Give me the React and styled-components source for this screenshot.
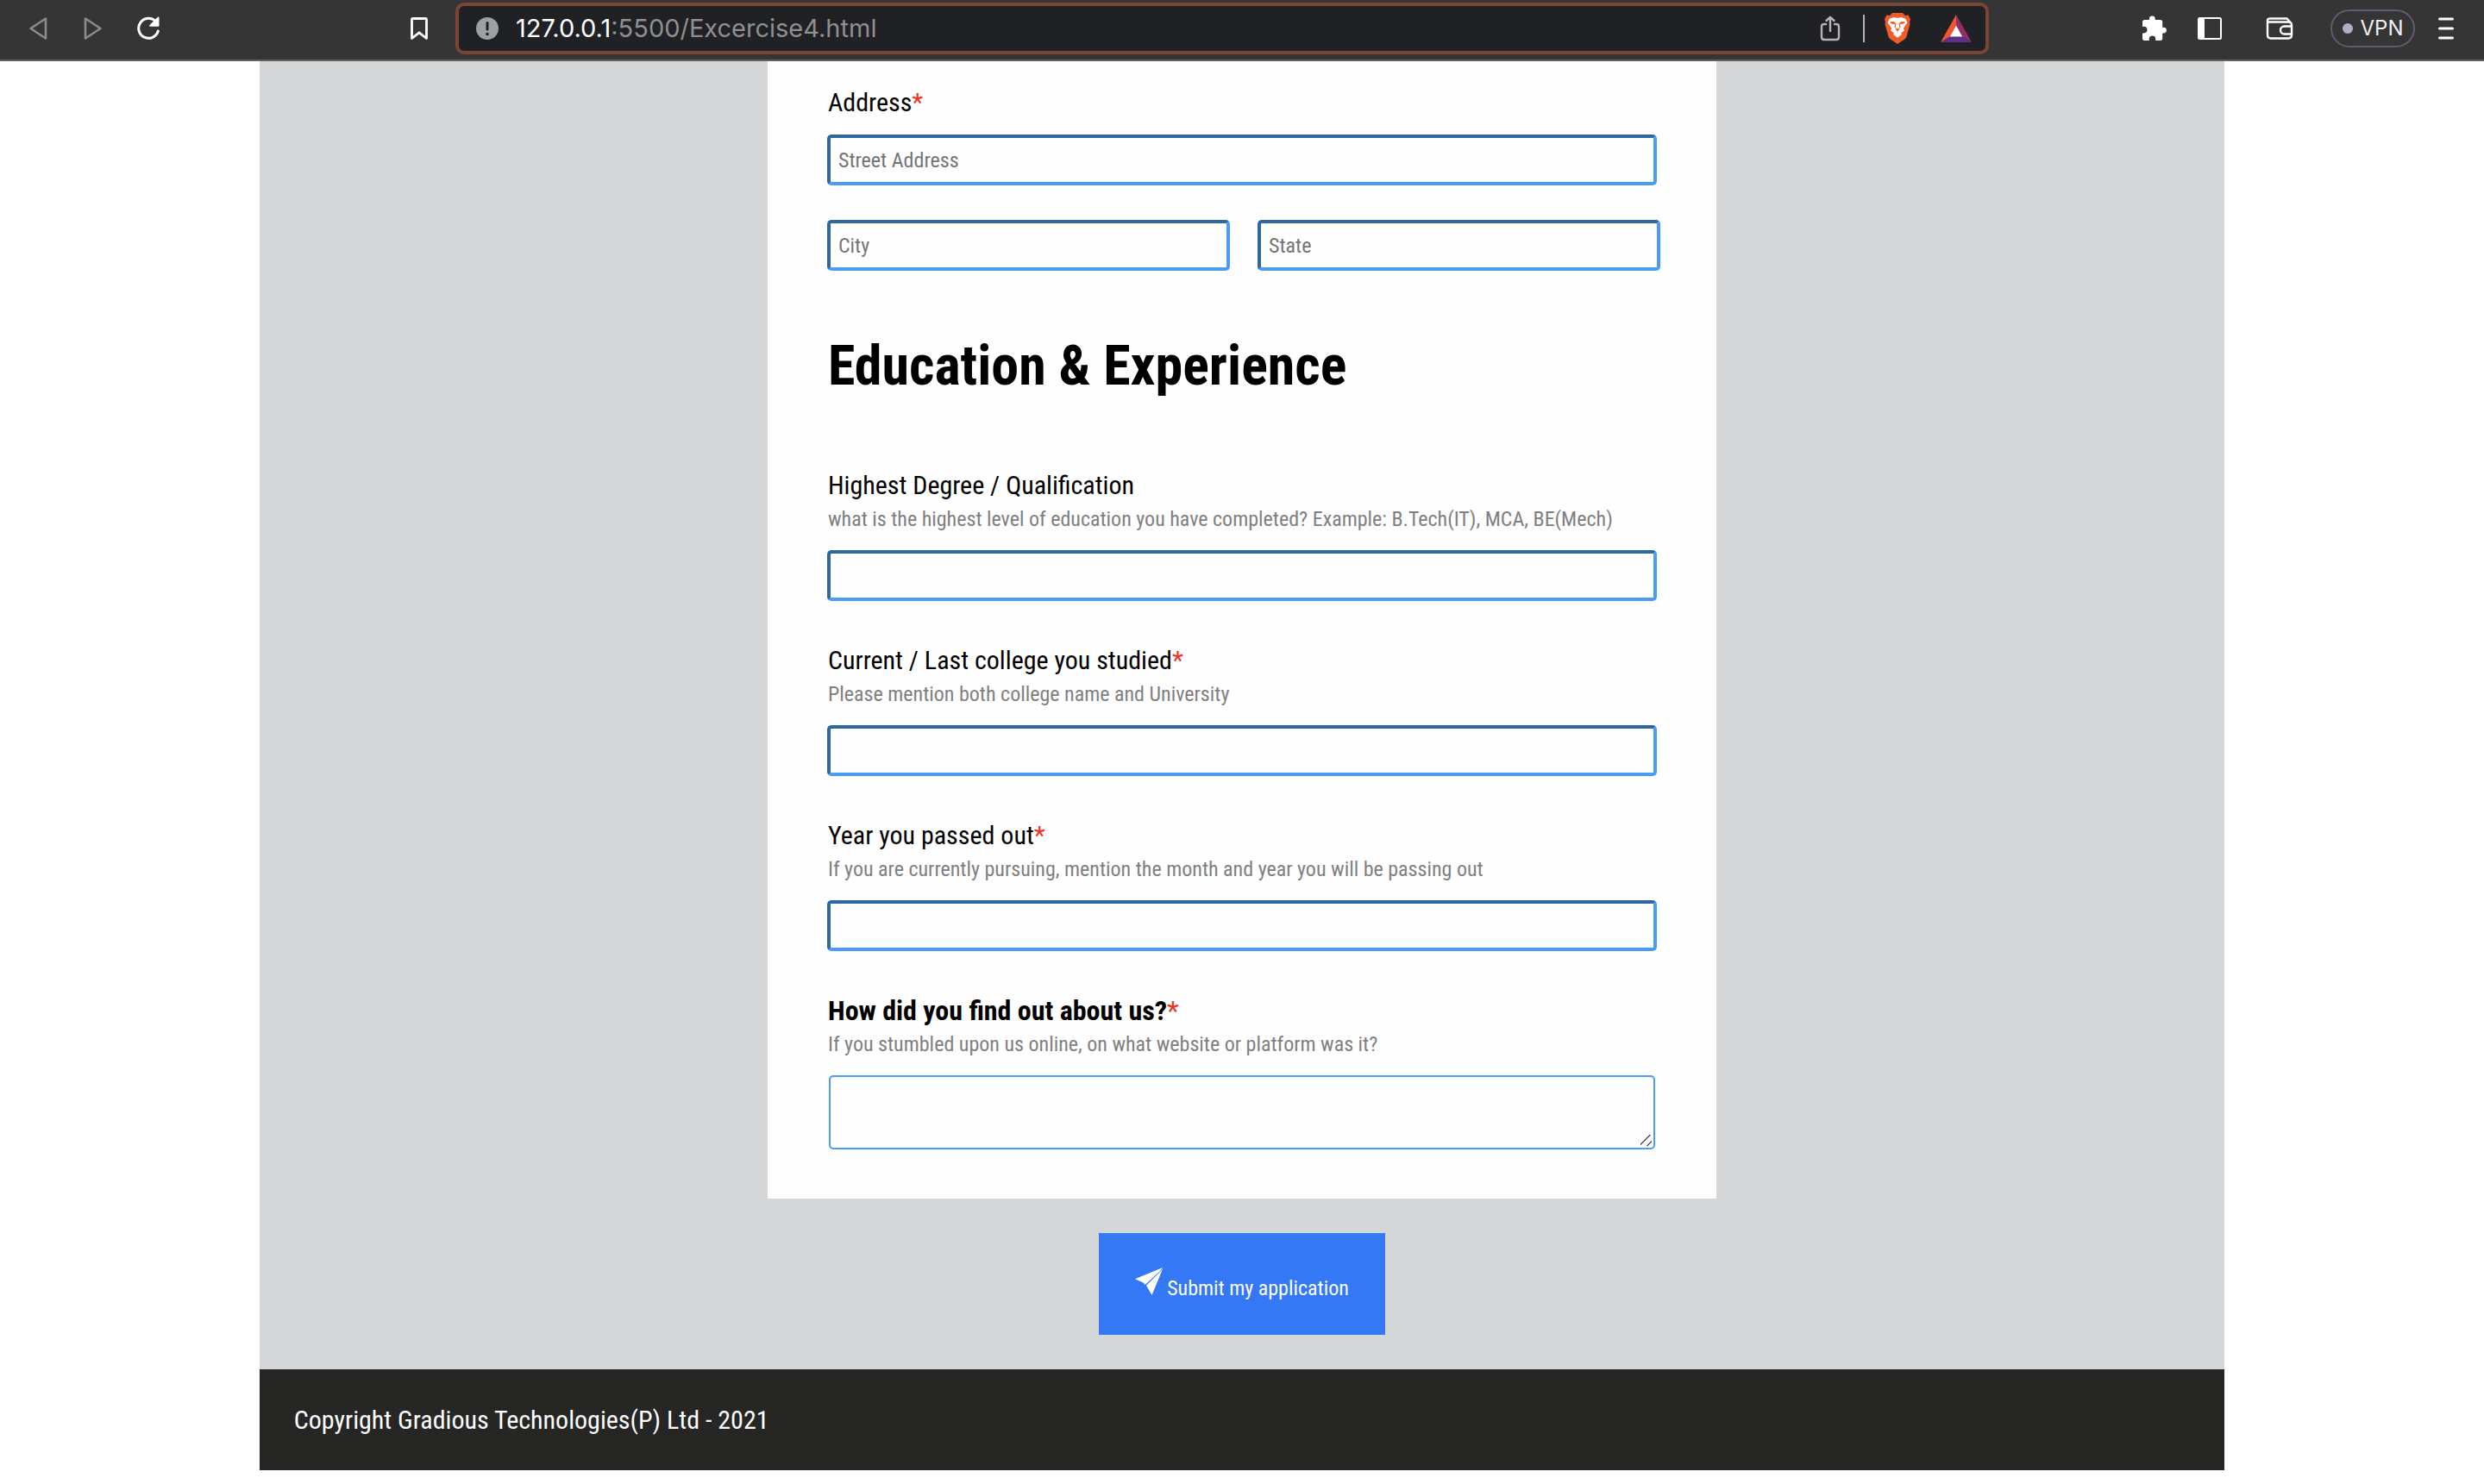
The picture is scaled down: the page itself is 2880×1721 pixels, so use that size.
import React from "react";
import styled, { createGlobalStyle, css } from "styled-components";

const narrow = `"Liberation Sans Narrow", "Arial Narrow", "Roboto Condensed", "Liberation Sans", Arial, sans-serif`;
const ui = `Inter, Roboto, "Liberation Sans", sans-serif`;

const GlobalStyle = createGlobalStyle`
  *, *::before, *::after { box-sizing: border-box; }
  body { margin: 0; background: #fff; font-family: ${narrow}; }
`;

/* ---------- browser toolbar ---------- */

const Toolbar = styled.header`
  display: flex;
  align-items: center;
  height: 71px;
  padding: 0 22px 3px;
  background: #353535;
  border-bottom: 2px solid #626263;
  font-family: ${ui};
`;

const ToolGroup = styled.div`
  display: flex;
  align-items: center;
  gap: ${(p) => p.$gap || 0}px;
`;

const NavTools = styled(ToolGroup)`
  width: 506px;
  padding-right: 20px;

  > :last-child { margin-left: auto; }
`;

const RightTools = styled(ToolGroup)`
  width: 552px;
  justify-content: flex-end;
`;

const IconButton = styled.button`
  display: grid;
  place-items: center;
  width: ${(p) => (p.$small ? 36 : 44)}px;
  height: 44px;
  padding: 0;
  border: 0;
  background: none;
  color: ${(p) => p.$color || "#fff"};

  svg { display: block; }
`;

const AddressBar = styled.div`
  flex: 1;
  display: flex;
  align-items: center;
  gap: 20px;
  height: 60px;
  padding: 0 16px 0 20px;
  border: 4px solid #7b4434;
  border-radius: 10px;
  background: #202124;
`;

const Url = styled.div`
  flex: 1;
  color: #8f8f90;
  font-size: 29px;
  line-height: 36px;
  white-space: nowrap;
`;

const Host = styled.span`
  color: #fff;
`;

const Divider = styled.span`
  width: 2px;
  height: 32px;
  background: #b4b4b4;
`;

const VpnButton = styled.button`
  display: flex;
  align-items: center;
  justify-content: center;
  gap: 9px;
  width: 98px;
  height: 44px;
  padding: 0;
  border: 2px solid #5e5d70;
  border-radius: 22px;
  background: none;
  color: #f0eff8;
  font-family: ${ui};
  font-size: 24px;
  line-height: 32px;

  &::before {
    content: "";
    width: 12px;
    height: 12px;
    border-radius: 50%;
    background: #b0aec4;
  }
`;

/* ---------- page ---------- */

const Page = styled.div`
  padding: 0 16px 16px;
`;

const Container = styled.div`
  width: 80%;
  margin: 0 auto;
  background: #d5d6d8;
`;

const ApplicationForm = styled.form`
  display: flex;
  flex-direction: column;
  align-items: center;
  gap: 40px;
  padding-bottom: 40px;
`;

const Card = styled.div`
  width: 100%;
  max-width: 1100px;
  padding: 28px 69px 57px;
  background: #fefefe;
`;

const Field = styled.div`
  display: flex;
  flex-direction: column;

  & + & { margin-top: 49px; }
`;

const Label = styled.label`
  padding-left: 1px;
  color: #000;
  font-size: ${(p) => (p.$bold ? 32 : 30)}px;
  font-weight: ${(p) => (p.$bold ? 700 : 400)};
  line-height: 40px;
`;

const Required = styled.span`
  color: #ea3323;
  font-weight: 400;
`;

const Hint = styled.span`
  padding-left: 1px;
  color: #808080;
  font-size: 24px;
  line-height: 38px;
`;

const control = css`
  display: block;
  width: 100%;
  font-family: ${narrow};
  font-size: 24px;
  background: transparent;
  color: #000;
  outline: none;

  &::placeholder { color: #757575; opacity: 1; }
`;

const TextInput = styled.input`
  ${control}
  min-width: 0;
  height: 59px;
  padding: 0 9px;
  border: 4px solid;
  border-color: #2f689f #4a9df3 #4a9df3 #2f689f;
  border-radius: 5px;
`;

const FieldInput = styled(TextInput)`
  margin-top: 17px;
`;

const TextArea = styled.textarea`
  ${control}
  width: auto;
  height: 86px;
  margin: 17px 2px 0;
  padding: 4px 8px;
  border: 2px solid #4a9df3;
  border-radius: 5px;
  resize: vertical;

  &::-webkit-resizer {
    background: linear-gradient(
        135deg,
        transparent 38%,
        #5c5c5c 40%,
        #5c5c5c 46%,
        transparent 48%,
        transparent 73%,
        #5c5c5c 75%,
        #5c5c5c 81%,
        transparent 83%
      )
      0 0 / 13px 13px no-repeat;
  }
`;

const Pair = styled.div`
  display: grid;
  grid-template-columns: 1fr 1fr;
  gap: 32px;
  margin: 40px -4px 0 0;
`;

const SectionTitle = styled.h1`
  margin: 75px 0 82px;
  padding-left: 1px;
  color: #000;
  font-size: 64px;
  font-weight: 700;
  line-height: 72px;
`;

const SubmitButton = styled.button`
  display: flex;
  align-items: baseline;
  gap: 4px;
  padding: 40px 42px;
  border: 0;
  background: #3478f6;
  color: #fff;
  font-family: ${narrow};
  font-size: 24px;
  line-height: 28px;
`;

const Footer = styled.footer`
  padding: 40px;
  background: #262624;
  color: #fff;
  font-size: 30px;
  line-height: 37px;
`;

/* ---------- icons ---------- */

const Back = () => (
  <svg width="22" height="28" viewBox="0 0 22 28" fill="none" stroke="currentColor" strokeWidth="2.6" strokeLinejoin="round">
    <path d="M20 2.5v23L2.5 14z" />
  </svg>
);
const Forward = () => (
  <svg width="22" height="28" viewBox="0 0 22 28" fill="none" stroke="currentColor" strokeWidth="2.6" strokeLinejoin="round">
    <path d="M2 2.5v23L19.5 14z" />
  </svg>
);
const Reload = () => (
  <svg width="28" height="28" viewBox="0 0 28 28" fill="none">
    <path d="M22.5 5.8A11.5 11.5 0 1 0 25.3 17" stroke="currentColor" strokeWidth="3" strokeLinecap="round" />
    <path d="M25.5 1.5v9.3h-9.3z" fill="currentColor" stroke="currentColor" strokeWidth="2" strokeLinejoin="round" />
  </svg>
);
const Bookmark = () => (
  <svg width="22" height="28" viewBox="0 0 22 28" fill="none" stroke="currentColor" strokeWidth="2.8" strokeLinejoin="round">
    <path d="M2.5 3.5q0-1 1-1h15q1 0 1 1v22L11 18.8 2.5 25.5z" />
  </svg>
);
const Info = () => (
  <svg width="26" height="26" viewBox="0 0 26 26">
    <circle cx="13" cy="13" r="13" fill="#9aa0a4" />
    <path d="M13 6.5v7.5" stroke="#202124" strokeWidth="3" strokeLinecap="round" />
    <circle cx="13" cy="19.5" r="1.8" fill="#202124" />
  </svg>
);
const Share = () => (
  <svg width="24" height="30" viewBox="0 0 24 30" fill="none" stroke="currentColor" strokeWidth="2.4" strokeLinecap="round" strokeLinejoin="round">
    <path d="M7 10H5q-3 0-3 3v12q0 3 3 3h14q3 0 3-3V13q0-3-3-3h-2M12 18V2M7.5 6 12 1.8 16.500 6" />
  </svg>
);
const Lion = () => (
  <svg width="32" height="36" viewBox="0 0 32 36">
    <path d="M10 0h12l3 3 3.500-.5L31 7l-1 4 .5 2-4 14.500q-.7 2-2.500 3.300L16 36l-8-5.200Q6.200 29.500 5.500 27.500L1.500 13l.5-2L1 7l2.500-4.500L7 3z" fill="#ec5b29" />
    <path d="M16 6l4-1 5 1.500 2.500 4.500-4.500 6.500.8 3-4.300 3.500L16 22l-3.500 2-4.300-3.500.8-3L4.500 11 7 6.500 12 5z" fill="#fff" />
    <path d="M10.500 24.500 16 22.200l5.500 2.300L16 28.800z" fill="#fff" />
    <path d="M7.500 10.500q3-1 6 .5l-1 2.200-5-1.200zM24.500 10.500q-3-1-6 .5l1 2.200 5-1.200zM13 17l3 1.500 3-1.500-1.500 3L16 21.500 14.500 20z" fill="#ec5b29" />
    <path d="M14 11.500 13 17M18 11.500l1 5.500" stroke="#ec5b29" strokeWidth="1.200" />
  </svg>
);
const Rewards = () => (
  <svg width="36" height="32" viewBox="0 0 36 32">
    <path d="M18 0v12.500L11 25.500 0 32z" fill="#f0562f" />
    <path d="M18 0v12.500l7 13L36 32z" fill="#932d68" />
    <path d="M0 32l11-6.500h14L36 32z" fill="#5f2e8f" />
    <path d="M18 12.500 25.200 25.500H10.800z" fill="#fff" />
  </svg>
);
const Puzzle = () => (
  <svg width="30" height="30" viewBox="0 0 30 30" fill="currentColor">
    <path d="M25.500 13.700h-1.300V7.500Q24.200 5 21.700 5h-6V3.800a3.400 3.400 0 0 0-6.800 0V5H3.500Q1 5 1 7.500v5.300h1.700a3.800 3.800 0 0 1 0 7.600H1v6.100Q1 29 3.500 29h5.300v-1.700a3.700 3.700 0 0 1 7.400 0V29h5.500q2.500 0 2.500-2.500v-6h1.300a3.400 3.400 0 0 0 0-6.800z" />
  </svg>
);
const Sidebar = () => (
  <svg width="28" height="26" viewBox="0 0 28 26">
    <rect x="1" y="1" width="26" height="24" rx="1.500" fill="none" stroke="currentColor" strokeWidth="2" />
    <path d="M1 1h7v24H1z" fill="currentColor" />
  </svg>
);
const Wallet = () => (
  <svg width="32" height="26" viewBox="0 0 32 26" fill="none" stroke="currentColor" strokeWidth="2.400" strokeLinejoin="round">
    <path d="M2 4v16.500q0 4 4 4h20q4 0 4-4V9q0-3.500-4-3.500H3M2 4q0-2.500 3-2.500h19.500L29 6.500" />
    <path d="M30 10.500h-8.500a4.500 4.500 0 0 0 0 9H30" />
  </svg>
);
const Menu = () => (
  <svg width="18" height="26" viewBox="0 0 18 26" stroke="currentColor" strokeWidth="3" strokeLinecap="round">
    <path d="M1.500 2h15M1.500 13h15M1.500 24h15" />
  </svg>
);
const PaperPlane = () => (
  <svg width="33" height="32" viewBox="0 0 33 32" fill="currentColor">
    <path d="M32 0 0 13.200l9.500 4.300 2.200 2.500L29 4z" />
    <path d="M32.500.5 19.500 32 13 20.800 30.500 3.500z" />
  </svg>
);

/* ---------- app ---------- */

const questions = [
  {
    id: "degree",
    label: "Highest Degree / Qualification",
    hint: "what is the highest level of education you have completed? Example: B.Tech(IT), MCA, BE(Mech)",
  },
  {
    id: "college",
    label: "Current / Last college you studied",
    hint: "Please mention both college name and University",
    required: true,
  },
  {
    id: "year",
    label: "Year you passed out",
    hint: "If you are currently pursuing, mention the month and year you will be passing out",
    required: true,
  },
  {
    id: "source",
    label: "How did you find out about us?",
    hint: "If you stumbled upon us online, on what website or platform was it?",
    required: true,
    bold: true,
    multiline: true,
  },
];

function Question({ id, label, hint, required, bold, multiline }) {
  const Control = multiline ? TextArea : FieldInput;
  return (
    <Field>
      <Label htmlFor={id} $bold={bold}>
        {label}
        {required && <Required>*</Required>}
      </Label>
      <Hint id={`${id}-hint`}>{hint}</Hint>
      <Control id={id} name={id} aria-describedby={`${id}-hint`} />
    </Field>
  );
}

export default function App() {
  return (
    <>
      <GlobalStyle />
      <Toolbar>
        <NavTools $gap={20}>
          <IconButton aria-label="Back" $color="#8b8b8b"><Back /></IconButton>
          <IconButton aria-label="Forward" $color="#8b8b8b"><Forward /></IconButton>
          <IconButton aria-label="Reload"><Reload /></IconButton>
          <IconButton aria-label="Bookmark"><Bookmark /></IconButton>
        </NavTools>
        <AddressBar>
          <Info />
          <Url>
            <Host>127.0.0.1</Host>:5500/Excercise4.html
          </Url>
          <IconButton $small aria-label="Share" $color="#b4b4b4"><Share /></IconButton>
          <Divider />
          <ToolGroup $gap={32}>
            <IconButton $small aria-label="Shields"><Lion /></IconButton>
            <IconButton $small aria-label="Rewards"><Rewards /></IconButton>
          </ToolGroup>
        </AddressBar>
        <RightTools $gap={37}>
          <ToolGroup $gap={20}>
            <IconButton aria-label="Extensions"><Puzzle /></IconButton>
            <IconButton aria-label="Sidebar"><Sidebar /></IconButton>
          </ToolGroup>
          <IconButton aria-label="Wallet"><Wallet /></IconButton>
          <ToolGroup $gap={14}>
            <VpnButton>VPN</VpnButton>
            <IconButton aria-label="Menu"><Menu /></IconButton>
          </ToolGroup>
        </RightTools>
      </Toolbar>
      <Page>
        <Container>
          <ApplicationForm onSubmit={(e) => e.preventDefault()}>
            <Card>
              <Field>
                <Label htmlFor="street">
                  Address<Required>*</Required>
                </Label>
                <FieldInput id="street" name="street" placeholder="Street Address" />
              </Field>
              <Pair>
                <TextInput name="city" aria-label="City" placeholder="City" />
                <TextInput name="state" aria-label="State" placeholder="State" />
              </Pair>
              <SectionTitle>Education &amp; Experience</SectionTitle>
              {questions.map((q) => (
                <Question key={q.id} {...q} />
              ))}
            </Card>
            <SubmitButton type="submit">
              <PaperPlane />
              Submit my application
            </SubmitButton>
          </ApplicationForm>
          <Footer>Copyright Gradious Technologies(P) Ltd - 2021</Footer>
        </Container>
      </Page>
    </>
  );
}
